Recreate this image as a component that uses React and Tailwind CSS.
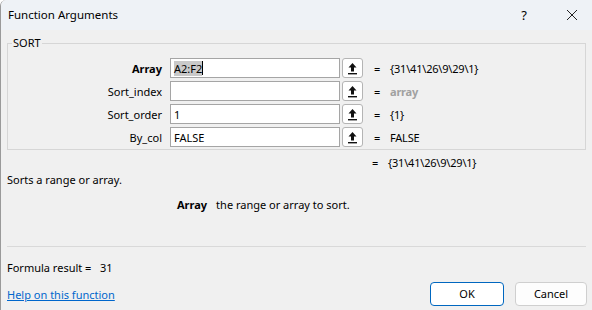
import React from 'react';

const RefButton = () => (
  <div className="ml-[2px] w-[21px] h-[20px] bg-white border border-[#b4b4b4] rounded-[3px] flex items-center justify-center">
    <svg width="11" height="13" viewBox="0 0 11 13">
      <path d="M5.5 1 L1.5 5.5 H4 V9.5 H7 V5.5 H9.5 Z" fill="#111" />
      <rect x="1" y="11" width="9" height="1.4" fill="#111" />
    </svg>
  </div>
);

const rows = [
  { label: 'Array', value: 'A2:F2', result: '{31\\41\\26\\9\\29\\1}', bold: true, selected: true },
  { label: 'Sort_index', value: '', result: 'array', muted: true },
  { label: 'Sort_order', value: '1', result: '{1}' },
  { label: 'By_col', value: 'FALSE', result: 'FALSE' },
];

function ArgRow({ row }) {
  return (
    <div className="flex items-center h-[20px]">
      <div className={`w-[155px] pr-[1px] text-right ${row.bold ? 'font-bold' : ''}`}>{row.label}</div>
      <div className="ml-[7px] w-[170px] h-[20px] bg-white border border-[#a5a5a5] flex items-center px-[3px]">
        {row.selected ? (
          <>
            <span className="bg-[#c9c9c9] leading-[15px]">{row.value}</span>
            <span className="w-[1px] h-[14px] bg-black" />
          </>
        ) : (
          <span>{row.value}</span>
        )}
      </div>
      <RefButton />
      <div className="ml-[11px] w-[5px]">=</div>
      <div className={`ml-[11px] tracking-[-0.2px] ${row.muted ? 'text-[#a0a0a0] font-bold' : ''}`}>{row.result}</div>
    </div>
  );
}

export default function App() {
  return (
    <div className="w-[592px] h-[310px] overflow-hidden bg-[#f0f0f0] border-l border-[#9a9a9a] rounded-tl-[6px] text-[11px] text-black font-['Noto_Sans',sans-serif] leading-none">
      <div className="h-[30px] bg-[#eef2f6] flex items-center pl-[7px]">
        <span className="text-[11.5px]">Function Arguments</span>
        <span className="ml-auto mr-[39px] text-[13px]">?</span>
        <svg width="12" height="12" viewBox="0 0 12 12" className="mr-[14px]">
          <path d="M1 1 L11 11 M11 1 L1 11" stroke="#222" strokeWidth="1" />
        </svg>
      </div>

      <div className="px-[6px]">
        <fieldset className="mt-[6px] border border-[#d6d6d6] h-[114px] pt-[8px] flex flex-col gap-[3px]">
          <legend className="ml-[4px] px-[1px] leading-[14px]">SORT</legend>
          {rows.map((r) => (
            <ArgRow key={r.label} row={r} />
          ))}
        </fieldset>

        <div className="h-[22px] pt-[2px] flex items-center">
          <div className="ml-[365px] w-[5px]">=</div>
          <div className="ml-[11px] tracking-[-0.2px]">{'{31\\41\\26\\9\\29\\1}'}</div>
        </div>
        <div className="h-[14px] flex items-center">Sorts a range or array.</div>
        <div className="h-[36px] pt-[1px] flex items-center">
          <span className="ml-[170px] font-bold">Array</span>
          <span className="ml-[9px]">the range or array to sort.</span>
        </div>
        <div className="mt-[24px] border-t border-[#d9d9d9]" />
        <div className="h-[35px] pt-[6px] flex items-center">Formula result =&nbsp;&nbsp;&nbsp;31</div>
        <div className="flex items-center h-[23px]">
          <a className="text-[#0066cc] underline pt-[2px]">Help on this function</a>
          <button className="ml-auto w-[74px] h-[24px] bg-white border border-[#0067c0] rounded-[4px]">OK</button>
          <button className="ml-[11px] mr-[-1px] w-[72px] h-[24px] bg-[#fdfdfd] border border-[#cfcfcf] rounded-[4px]">Cancel</button>
        </div>
      </div>
    </div>
  );
}
